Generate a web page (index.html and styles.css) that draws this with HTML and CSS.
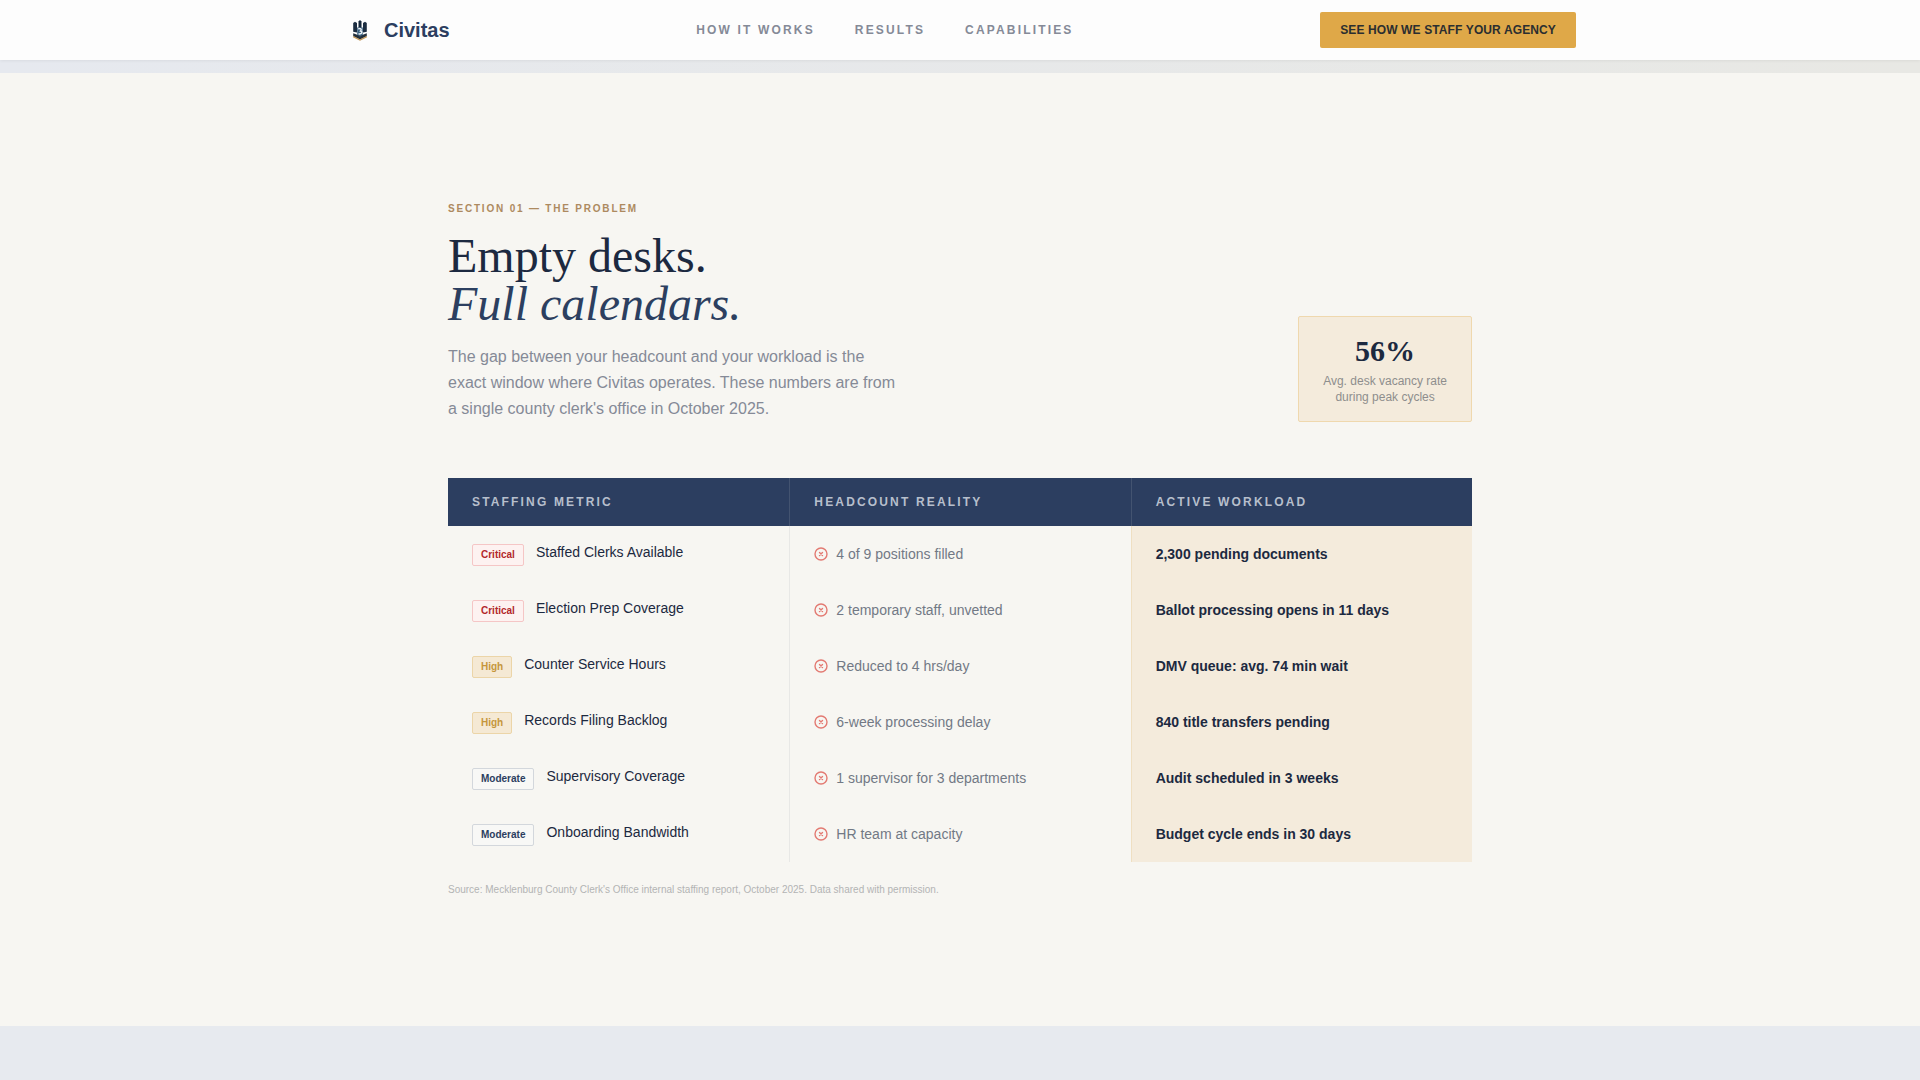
FILE: index.html
```html
<!DOCTYPE html>
<html lang="en">
<head>
<meta charset="utf-8">
<meta name="viewport" content="width=device-width, initial-scale=1">
<title>Civitas</title>
<link rel="stylesheet" href="styles.css">
</head>
<body>
<svg class="sprite" aria-hidden="true">
  <symbol id="cross" viewBox="0 0 14 14">
    <circle cx="7" cy="7" r="6" fill="none" stroke="currentColor" stroke-width="1.4"/>
    <path d="M5.5 5.5l3 3M8.500 5.5l-3 3" fill="none" stroke="currentColor" stroke-width="1.4" stroke-linecap="round"/>
  </symbol>
</svg>
<header class="site-header">
  <div class="site-header-inner">
    <a class="brand" href="#">
      <svg class="brand-mark" viewBox="0 0 32 32" aria-hidden="true">
        <path d="M9.200 9l1.800-1.200 2 1.200v9.500l-3.800-.8z" fill="#1b2c40"/>
        <path d="M22.800 9L21 7.800 19 9v9.500l3.800-.8z" fill="#1b2c40"/>
        <path d="M14.500 7.500L16 6l1.500 1.500V14h-3z" fill="#14263a"/>
        <path d="M13.200 13.500h5.600v8L16 23l-2.800-1.500z" fill="#3a6180"/>
        <path d="M14.300 15c2-1 4 0 2.200 2 2.300.5 1.500 3.500-2 2.800" fill="none" stroke="#eef3f6" stroke-width="1.400"/>
        <path d="M9.200 19.200l4 1.600L16 22.600l2.800-1.800 4-1.600v3L16 25.600l-6.800-3.400z" fill="#23303c"/>
        <path d="M9.200 22.600L16 26l6.800-3.400" fill="none" stroke="#c49a5e" stroke-width="1.300"/>
      </svg>
      <span>Civitas</span>
    </a>
    <nav class="site-nav" aria-label="Main">
      <a href="#how">How it works</a>
      <a href="#results">Results</a>
      <a href="#capabilities">Capabilities</a>
    </nav>
    <button class="cta" type="button">SEE HOW WE STAFF YOUR AGENCY</button>
  </div>
</header>
<main class="page">
  <div class="hero-edge"></div>
  <section class="problem">
    <div class="problem-inner">
      <div class="intro">
        <div class="intro-copy">
          <p class="eyebrow">Section 01 — The Problem</p>
          <h2 class="title">Empty desks.<br><em>Full calendars.</em></h2>
          <p class="lead">The gap between your headcount and your workload is the exact window where Civitas operates. These numbers are from a single county clerk's office in October 2025.</p>
        </div>
        <aside class="stat">
          <strong class="stat-value">56%</strong>
          <span class="stat-label">Avg. desk vacancy rate<br>during peak cycles</span>
        </aside>
      </div>
      <table class="metrics">
        <thead>
          <tr><th scope="col">Staffing Metric</th><th scope="col">Headcount Reality</th><th scope="col">Active Workload</th></tr>
        </thead>
        <tbody>
          <tr>
            <td><div class="metric"><span class="badge badge-critical">Critical</span><span>Staffed Clerks Available</span></div></td>
            <td><div class="reality"><svg class="cross"><use href="#cross"/></svg><span>4 of 9 positions filled</span></div></td>
            <td class="workload">2,300 pending documents</td>
          </tr>
          <tr>
            <td><div class="metric"><span class="badge badge-critical">Critical</span><span>Election Prep Coverage</span></div></td>
            <td><div class="reality"><svg class="cross"><use href="#cross"/></svg><span>2 temporary staff, unvetted</span></div></td>
            <td class="workload">Ballot processing opens in 11 days</td>
          </tr>
          <tr>
            <td><div class="metric"><span class="badge badge-high">High</span><span>Counter Service Hours</span></div></td>
            <td><div class="reality"><svg class="cross"><use href="#cross"/></svg><span>Reduced to 4 hrs/day</span></div></td>
            <td class="workload">DMV queue: avg. 74 min wait</td>
          </tr>
          <tr>
            <td><div class="metric"><span class="badge badge-high">High</span><span>Records Filing Backlog</span></div></td>
            <td><div class="reality"><svg class="cross"><use href="#cross"/></svg><span>6-week processing delay</span></div></td>
            <td class="workload">840 title transfers pending</td>
          </tr>
          <tr>
            <td><div class="metric"><span class="badge badge-moderate">Moderate</span><span>Supervisory Coverage</span></div></td>
            <td><div class="reality"><svg class="cross"><use href="#cross"/></svg><span>1 supervisor for 3 departments</span></div></td>
            <td class="workload">Audit scheduled in 3 weeks</td>
          </tr>
          <tr>
            <td><div class="metric"><span class="badge badge-moderate">Moderate</span><span>Onboarding Bandwidth</span></div></td>
            <td><div class="reality"><svg class="cross"><use href="#cross"/></svg><span>HR team at capacity</span></div></td>
            <td class="workload">Budget cycle ends in 30 days</td>
          </tr>
        </tbody>
      </table>
      <p class="source">Source: Mecklenburg County Clerk's Office internal staffing report, October 2025. Data shared with permission.</p>
    </div>
  </section>
</main>
</body>
</html>
```
FILE: styles.css
```css
:root {
  --navy: #2c3e60;
  --ink: #1c2940;
  --muted: #858a97;
  --paper: #f7f6f2;
  --sand: #f4ebdc;
  --mist: #e7eaef;
  --tracking: 0.18em;
}

* {
  box-sizing: border-box;
}

body {
  margin: 0;
  min-height: 100vh;
  background: var(--mist);
  color: var(--ink);
  font-family: "Liberation Sans", Arial, sans-serif;
  font-size: 14px;
  line-height: 20px;
}

h2,
p {
  margin: 0;
}

.sprite {
  display: none;
}

.site-header {
  position: sticky;
  top: 0;
  z-index: 10;
  background: #fdfdfd;
  box-shadow: 0 1px 3px rgba(0, 0, 0, 0.06);
}

.site-header-inner {
  display: flex;
  align-items: center;
  justify-content: space-between;
  max-width: 1280px;
  margin: 0 auto;
  padding: 12px 24px;
}

.brand {
  display: flex;
  align-items: center;
  gap: 8px;
  color: var(--navy);
  font-size: 20px;
  font-weight: 700;
  line-height: 28px;
  text-decoration: none;
}

.brand-mark {
  width: 32px;
  height: 32px;
}

.site-nav {
  display: flex;
  gap: 40px;
}

.site-nav a {
  color: var(--muted);
  font-size: 12px;
  font-weight: 700;
  letter-spacing: var(--tracking);
  line-height: 16px;
  text-decoration: none;
  text-transform: uppercase;
}

.cta {
  padding: 10px 20px;
  border: 0;
  border-radius: 2px;
  background: #dfa848;
  color: #2b2e30;
  font: 700 12px/16px "Liberation Sans", Arial, sans-serif;
  letter-spacing: 0.01em;
  cursor: pointer;
}

.hero-edge {
  height: 13px;
  background: linear-gradient(90deg, #e6e9ef, #e8e8e4);
}

.problem {
  padding: 128px 24px;
  background: var(--paper);
}

.problem-inner {
  max-width: 1024px;
  margin: 0 auto;
}

.intro {
  display: flex;
  align-items: flex-end;
  justify-content: space-between;
  gap: 32px;
  margin-bottom: 56px;
}

.eyebrow {
  margin-bottom: 16px;
  color: #ad8a60;
  font-size: 10px;
  font-weight: 700;
  letter-spacing: var(--tracking);
  line-height: 15px;
  text-transform: uppercase;
}

.title {
  margin-bottom: 16px;
  font-family: "Liberation Serif", "Times New Roman", serif;
  font-size: 48px;
  font-weight: 400;
  line-height: 48px;
}

.title em {
  color: #2c3f60;
}

.lead {
  max-width: 448px;
  color: var(--muted);
  font-size: 16px;
  line-height: 26px;
}

.stat {
  display: flex;
  flex-direction: column;
  gap: 4px;
  padding: 16px 24px;
  border: 1px solid #efd8ae;
  border-radius: 2px;
  background: var(--sand);
  text-align: center;
}

.stat-value {
  font-family: "Liberation Serif", "Times New Roman", serif;
  font-size: 30px;
  line-height: 36px;
}

.stat-label {
  color: #8e8e8d;
  font-size: 12px;
  line-height: 16px;
}

.metrics {
  width: 100%;
  border-collapse: separate;
  border-spacing: 0;
  table-layout: fixed;
}

.metrics th {
  height: 48px;
  padding: 0 24px;
  background: var(--navy);
  color: #b7bfcc;
  font-size: 12px;
  font-weight: 700;
  letter-spacing: var(--tracking);
  line-height: 16px;
  text-align: left;
  text-transform: uppercase;
}

.metrics th + th {
  border-left: 1px solid #435370;
}

.metrics td {
  height: 56px;
  padding: 0 24px;
}

.metrics td + td {
  border-left: 1px solid #e8e8e6;
}

.metrics .workload {
  border-left-color: #efdfc2;
  background: var(--sand);
  font-weight: 700;
}

.metric {
  display: flex;
  align-items: flex-start;
  gap: 12px;
  line-height: 18px;
}

.badge {
  margin-top: 1px;
  padding: 2px 8px;
  border: 1px solid;
  border-radius: 2px;
  font-size: 10px;
  font-weight: 700;
  line-height: 16px;
}

.badge-critical {
  border-color: #f5c6c6;
  background: #fdf2f1;
  color: #b3272b;
}

.badge-high {
  border-color: #ecd5a8;
  background: #f5e9d4;
  color: #c5963c;
}

.badge-moderate {
  border-color: #d3d7dc;
  background: #f8f8f6;
  color: var(--navy);
}

.reality {
  display: flex;
  align-items: center;
  gap: 8px;
  color: #727985;
}

.cross {
  flex: none;
  width: 14px;
  height: 14px;
  color: #e37a72;
}

.source {
  margin-top: 20px;
  color: #b3b4b4;
  font-size: 10px;
  line-height: 16px;
}
```
